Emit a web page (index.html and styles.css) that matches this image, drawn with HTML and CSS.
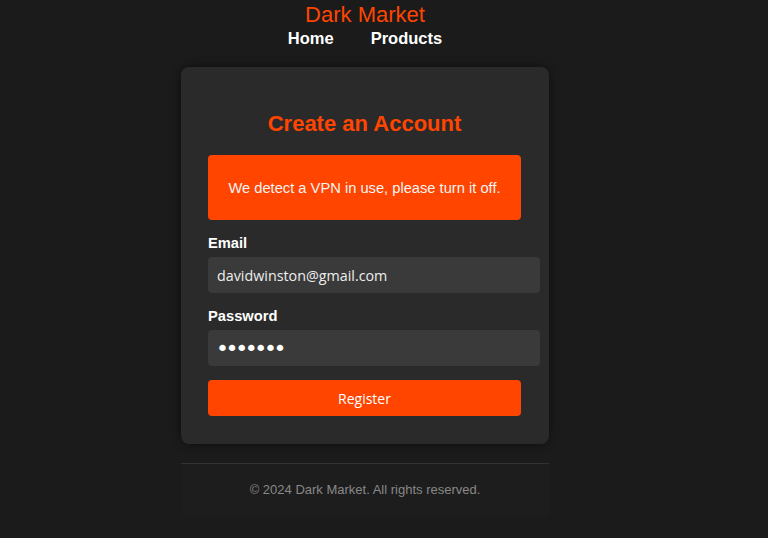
FILE: index.html
```html
<!DOCTYPE html>
<html lang="en">
<head>
<meta charset="utf-8">
<title>Dark Market - Register</title>
<link rel="stylesheet" href="styles.css">
</head>
<body>
<div class="page">
<header class="site-header">
  <h1 class="brand">Dark Market</h1>
  <nav class="nav">
    <a href="#" class="nav-link">Home</a>
    <a href="#" class="nav-link">Products</a>
  </nav>
</header>
<main class="card">
  <h2 class="card-title">Create an Account</h2>
  <div class="alert">We detect a VPN in use, please turn it off.</div>
  <form class="form">
    <label class="label" for="email">Email</label>
    <input class="input" id="email" type="email" value="davidwinston@gmail.com">
    <label class="label" for="password">Password</label>
    <input class="input input-password" id="password" type="password" value="1234567">
    <button class="btn" type="button">Register</button>
  </form>
</main>
<footer class="footer">
  <p class="footer-text">© 2024 Dark Market. All rights reserved.</p>
</footer>
</div>
</body>
</html>
```
FILE: styles.css
```css
* { box-sizing: content-box; }
html, body {
  margin: 0;
  background: #1b1b1b;
}
body {
  color: #fff;
  font-family: "Liberation Sans", Arial, sans-serif;
}
.page {
  width: 730px;
}
.site-header {
  text-align: center;
  padding-top: 2px;
}
.brand {
  margin: 0;
  font-size: 22px;
  font-weight: normal;
  color: #ff4500;
  line-height: 26px;
}
.nav {
  display: flex;
  justify-content: center;
  gap: 37px;
  line-height: 20px;
}
.nav-link {
  color: #fff;
  text-decoration: none;
  font-weight: bold;
  font-size: 16.5px;
}
.card {
  width: 313px;
  margin: 19px auto 0;
  padding: 27px 28px 28px 27px;
  background: #2a2a2a;
  border-radius: 8px;
  box-shadow: 0 0 10px rgba(0,0,0,0.5);
}
.card-title {
  margin: 16px 0 17px;
  text-align: center;
  color: #ff4500;
  font-size: 22px;
  line-height: 28px;
  font-weight: bold;
}
.alert {
  background: #ff4500;
  color: #f4f4f4;
  border-radius: 4px;
  text-align: center;
  font-size: 14.7px;
  line-height: 18px;
  padding: 24px 5px 23px;
}
.form {
  display: flex;
  flex-direction: column;
  align-items: flex-start;
  margin-top: 14px;
}
.label {
  font-weight: bold;
  font-size: 14.7px;
  line-height: 18px;
  margin-bottom: 5px;
}
.input {
  width: 314px;
  height: 36px;
  padding: 0 9px;
  border: none;
  border-radius: 4px;
  background: #3a3a3a;
  color: #eee;
  font-family: "Open Sans", "Noto Sans", sans-serif;
  font-size: 14.3px;
  margin-bottom: 14px;
}
.input-password {
  font-family: "DejaVu Sans", sans-serif;
  font-size: 22px;
  letter-spacing: -3.4px;
  padding-left: 8px;
  padding-right: 10px;
  color: #fff;
}
.input:focus { outline: none; }
.btn {
  box-sizing: border-box;
  width: 313px;
  height: 36px;
  padding: 0;
  border: none;
  border-radius: 4px;
  background: #ff4500;
  color: #fff;
  font-family: "Open Sans", "Noto Sans", sans-serif;
  font-size: 14px;
}
.footer {
  width: 368px;
  margin: 19px auto 0;
  border-top: 1px solid #333;
  background: #1d1d1d;
  text-align: center;
  padding: 18px 0 19px;
}
.footer-text {
  margin: 0;
  color: #888;
  font-size: 13px;
  line-height: 16px;
}
```
